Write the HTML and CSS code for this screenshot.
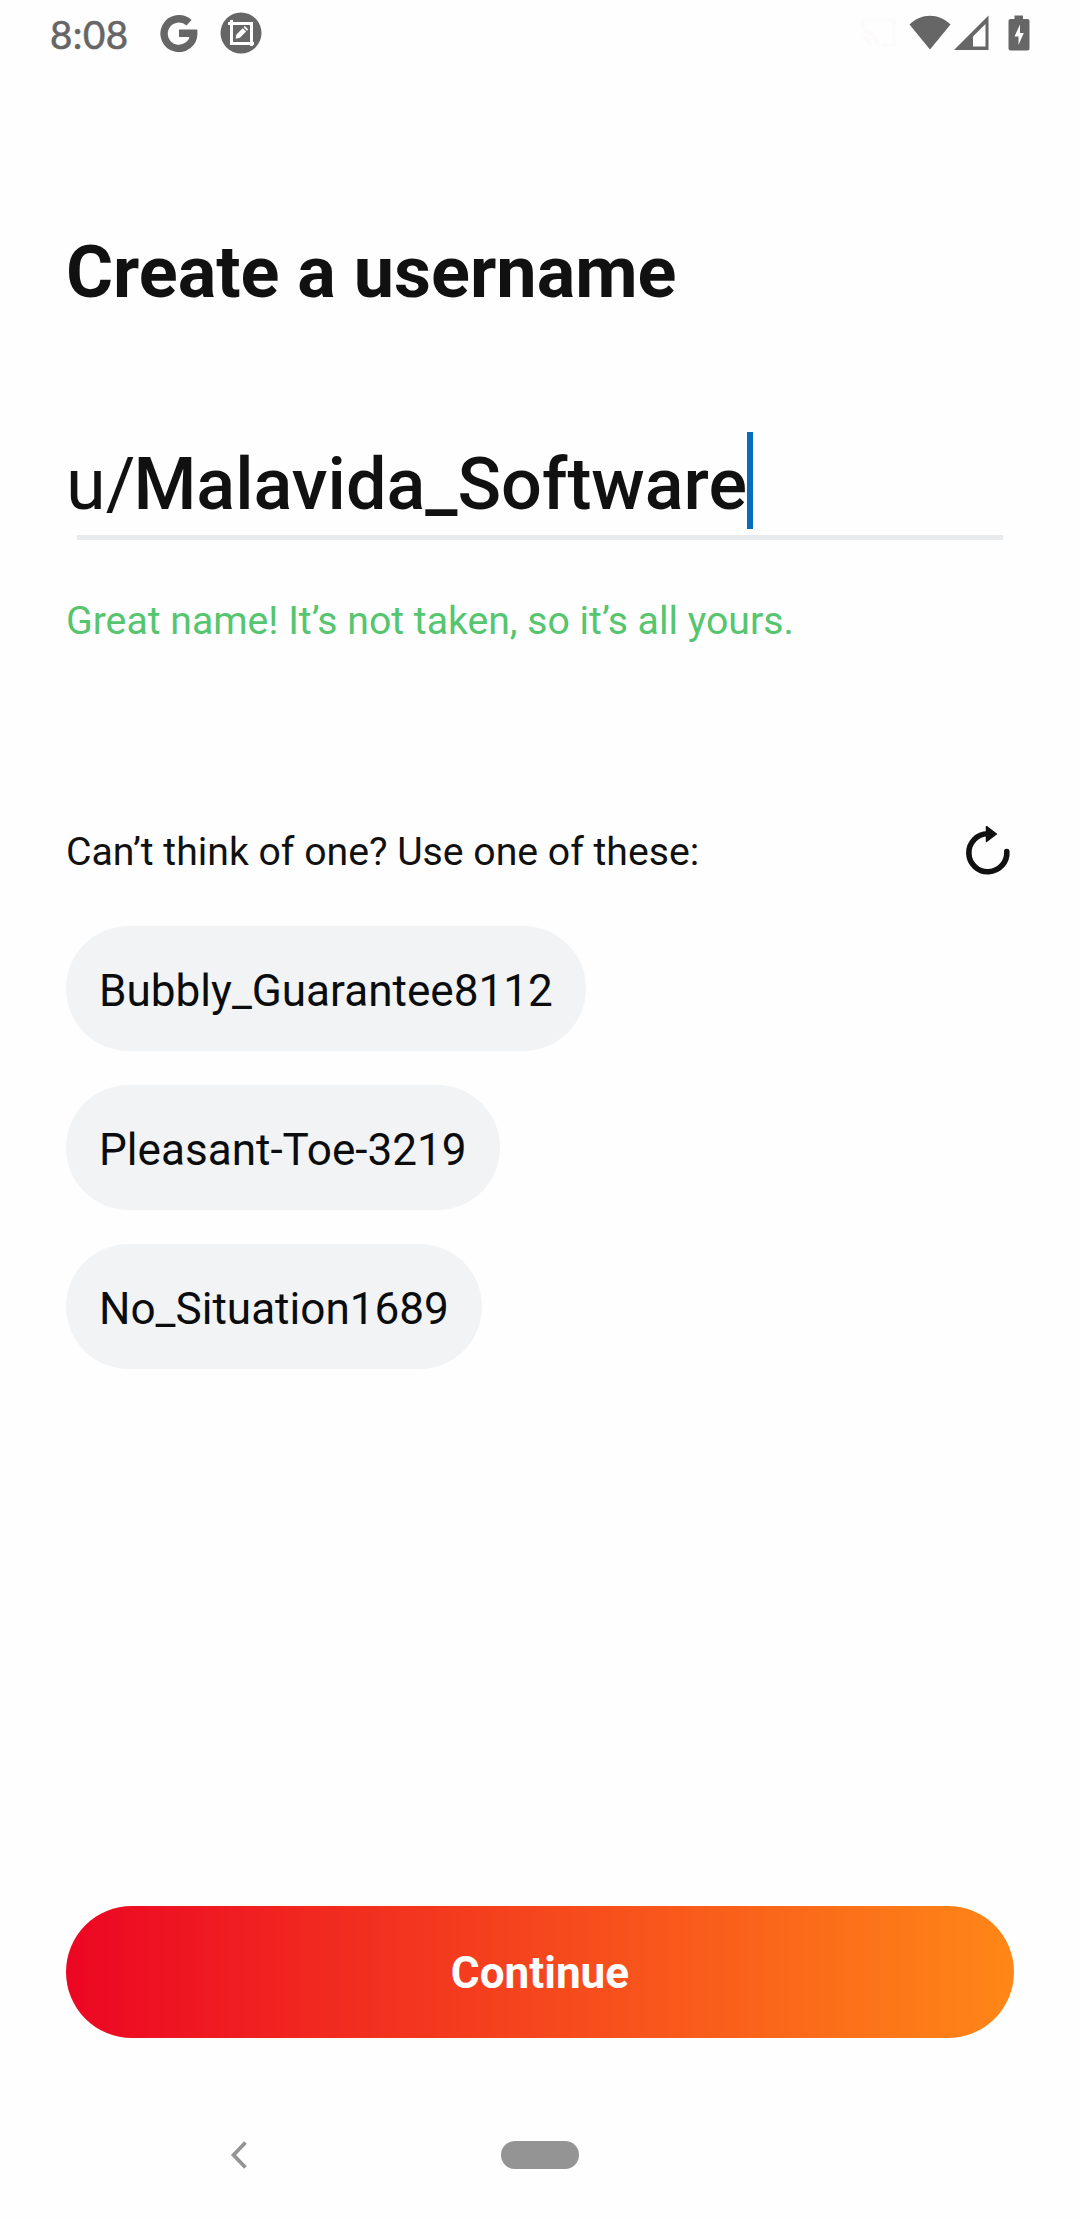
FILE: index.html
```html
<!DOCTYPE html>
<html lang="en">
<head>
  <meta charset="UTF-8" />
  <title>Create a username</title>
  <meta name="viewport" content="width=device-width, initial-scale=1" />
  <link rel="stylesheet" href="styles.css">
</head>
<body>

  <!-- Status bar -->
  <header class="status-bar">
    <span class="time">8:08</span>
    <svg class="icon-google" width="38" height="38" viewBox="0 0 38 38">
      <path d="M29 8.800A14.800 14.800 0 1 0 33.700 19.300H19" fill="none" stroke="#666" stroke-width="7.400" />
    </svg>
    <svg class="icon-edit" width="42" height="42" viewBox="0 0 42 42">
      <circle cx="21" cy="21" r="20.5" fill="#666" />
      <path d="M8 11.5H31.5V34M11.5 8V31.5H34" fill="none" stroke="#fff" stroke-width="3" />
      <path d="M15.5 26.8l1-4.4 6.2-6.2 3.4 3.4-6.2 6.2zM23.6 15.3l1.2-1.2 3.4 3.4-1.2 1.2z" fill="#fff" />
    </svg>
    <div class="status-right">
      <svg class="icon-cast" width="36" height="30" viewBox="0 0 36 30">
        <path d="M2 9V2H33V27H21M2 13a14 14 0 0 1 14 14M2 20a7 7 0 0 1 7 7" fill="none" stroke="#fcfafa" stroke-width="3" />
      </svg>
      <svg class="icon-wifi" width="42" height="36" viewBox="0 0 42 36">
        <path d="M0.5 9.5C12 -2.2 30 -2.2 41.5 9.5L21 34.5z" fill="#666" />
      </svg>
      <svg class="icon-signal" width="36" height="36" viewBox="0 0 36 36">
        <path d="M0 35L34.5 0.5V35zM19 21.5V31.5H31.5V9z" fill="#666" fill-rule="evenodd" />
      </svg>
      <svg class="icon-battery" width="22" height="36" viewBox="0 0 22 36">
        <path d="M6.5 0.5H15V4H19.5Q21.5 4 21.5 6V33.5Q21.5 35.5 19.5 35.5H2.5Q0.5 35.5 0.5 33.5V6Q0.5 4 2.5 4H6.5zM12 9.5L6.5 21.5H10.5V30L15.800 18H12z" fill="#666" fill-rule="evenodd" />
      </svg>
    </div>
  </header>

  <main class="screen">
    <h1>Create a username</h1>

    <div class="username">
      <span class="prefix">u/</span><span class="name">Malavida_Software</span><span class="caret"></span>
    </div>
    <div class="underline"></div>
    <p class="message">Great name! It’s not taken, so it’s all yours.</p>

    <!-- Suggested names -->
    <div class="suggest-header">
      <p>Can’t think of one? Use one of these:</p>
      <button class="refresh-btn" aria-label="Refresh suggestions">
        <svg width="52" height="52" viewBox="0 0 52 52">
          <path d="M44.8 25.6A19 19 0 1 1 25.7 7.8" fill="none" stroke="#111" stroke-width="5.6" stroke-linecap="round" />
          <path d="M24.5 0.5L34.3 8L24.5 15.5z" fill="#111" stroke="#111" stroke-width="1.5" stroke-linejoin="round" />
        </svg>
      </button>
    </div>
    <div class="chips">
      <button class="chip">Bubbly_Guarantee8112</button>
      <button class="chip">Pleasant-Toe-3219</button>
      <button class="chip">No_Situation1689</button>
    </div>

    <button class="continue-btn">Continue</button>
  </main>

  <!-- System navigation -->
  <nav class="nav-bar">
    <svg width="20" height="28" viewBox="0 0 20 28">
      <path d="M16.5 1.5L4.5 14L16.5 26.5" fill="none" stroke="#949494" stroke-width="3.8" />
    </svg>
    <span class="home-pill"></span>
    <span></span>
  </nav>

</body>
</html>
```
FILE: styles.css
```css
* {
  box-sizing: border-box;
}
body {
  margin: 0;
  width: 1080px;
  height: 2220px;
  display: flex;
  flex-direction: column;
  font-family: Roboto, "Liberation Sans", sans-serif;
  background: #fefefe;
  color: #111;
}
h1,
p {
  margin: 0;
}
button {
  font-family: inherit;
  border: none;
  padding: 0;
  cursor: pointer;
}
svg {
  display: block;
  flex: none;
}

/* Status bar */
.status-bar {
  display: flex;
  align-items: center;
  height: 66px;
  padding: 0 50px;
}
.time {
  width: 110px;
  font-family: Lato, sans-serif;
  font-size: 38.5px;
  line-height: 46px;
  letter-spacing: 0.5px;
  -webkit-text-stroke: 0.6px #666;
  padding-top: 1px;
  color: #666;
}
.icon-edit {
  margin-left: 22px;
}
.status-right {
  display: flex;
  align-items: center;
  margin-left: auto;
}
.icon-wifi {
  margin-left: 12px;
}
.icon-signal {
  margin-left: 3px;
}
.icon-battery {
  margin-left: 18px;
}

/* Form */
.screen {
  flex: 1;
  display: flex;
  flex-direction: column;
  padding: 165px 66px 0;
}
h1 {
  font-size: 72px;
  line-height: 84px;
  font-weight: 700;
}
.username {
  display: flex;
  align-items: flex-start;
  height: 97px;
  margin-top: 117px;
  font-size: 72px;
  line-height: 105px;
}
.name {
  margin-left: -2px;
  font-weight: 500;
}
.caret {
  width: 6px;
  height: 97px;
  background: #0a6cbd;
}
.underline {
  height: 5px;
  margin: 6px 11px 0;
  background: #e8eaeb;
}
.message {
  margin-top: 58px;
  font-size: 39.2px;
  line-height: 46px;
  color: #55c56e;
}
.suggest-header {
  display: flex;
  justify-content: space-between;
  align-items: center;
  height: 50px;
  margin-top: 183px;
  font-size: 39.2px;
}
.refresh-btn {
  background: none;
}
.chips {
  display: flex;
  flex-direction: column;
  align-items: flex-start;
  gap: 34px;
  margin-top: 49px;
}
.chip {
  height: 125px;
  padding: 4px 33px 0;
  border-radius: 63px;
  background: #f1f3f5;
  color: #0b0c0d;
  font-size: 44.1px;
}
.continue-btn {
  height: 132px;
  margin-top: auto;
  padding-top: 1px;
  border-radius: 66px;
  background: linear-gradient(to right, #ec0623, #ff8717);
  color: #fff;
  font-size: 44.1px;
  font-weight: 700;
}

/* System navigation */
.nav-bar {
  display: grid;
  grid-template-columns: 1fr 78px 1fr;
  align-items: center;
  height: 182px;
  padding: 51px 0 0;
}
.nav-bar svg {
  margin-left: 229px;
}
.home-pill {
  height: 28px;
  border-radius: 14px;
  background: #949494;
}
```
